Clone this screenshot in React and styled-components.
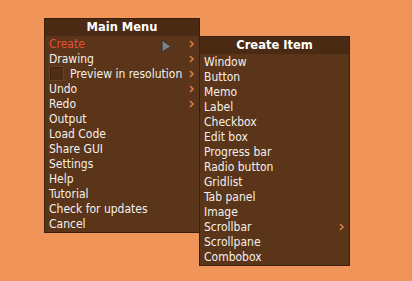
import React from "react";
import styled, { createGlobalStyle } from "styled-components";

const Global = createGlobalStyle`
  html, body {
    margin: 0;
    padding: 0;
    background: #f0945a;
  }
  body {
    font-family: "DejaVu Sans Condensed", "DejaVu Sans", sans-serif;
  }
`;

const Page = styled.div`
  width: 412px;
  height: 281px;
  position: relative;
  overflow: hidden;
  display: flex;
  align-items: flex-start;
  padding: 18px 0 0 44px;
  box-sizing: border-box;
`;

const Menu = styled.div`
  width: ${(p) => p.$width}px;
  margin-top: ${(p) => p.$offset || 0}px;
  margin-left: ${(p) => (p.$offset ? -1 : 0)}px;
  background: #5a3519;
  border: 1px solid #3a1f0c;
  box-sizing: border-box;
  display: flex;
  flex-direction: column;
  padding-bottom: 1px;
`;

const Header = styled.div`
  height: 17px;
  line-height: 17px;
  background: #4a2a13;
  color: #ffffff;
  font-family: "DejaVu Sans", sans-serif;
  font-weight: bold;
  font-size: 11.5px;
  text-align: center;
`;

const Item = styled.div`
  height: 15px;
  display: flex;
  align-items: center;
  justify-content: space-between;
  padding: 0 5px 0 4px;
  color: ${(p) => (p.$active ? "#e3503a" : "#f4f0ec")};
  font-size: 12px;
  white-space: nowrap;
`;

const Label = styled.span`
  display: flex;
  align-items: center;
  gap: 6px;
`;

const Check = styled.span`
  width: 15px;
  height: 15px;
  box-sizing: border-box;
  border: 1px solid #6a4126;
  background: #4f2e15;
  box-shadow: inset 1px 1px 0 #3f230e;
`;

const Arrow = styled.svg`
  flex: none;
`;

const Cursor = styled.svg`
  position: absolute;
  left: 161px;
  top: 39px;
`;

const SubArrow = () => (
  <Arrow width="5" height="8" viewBox="0 0 5 8">
    <path d="M1 1 L4 4 L1 7" fill="none" stroke="#d97a44" strokeWidth="1.6" />
  </Arrow>
);

const mainItems = [
  { t: "Create", sub: true, active: true },
  { t: "Drawing", sub: true },
  { t: "Preview in resolution", sub: true, check: true },
  { t: "Undo", sub: true },
  { t: "Redo", sub: true },
  { t: "Output" },
  { t: "Load Code" },
  { t: "Share GUI" },
  { t: "Settings" },
  { t: "Help" },
  { t: "Tutorial" },
  { t: "Check for updates" },
  { t: "Cancel" },
];

const createItems = [
  "Window",
  "Button",
  "Memo",
  "Label",
  "Checkbox",
  "Edit box",
  "Progress bar",
  "Radio button",
  "Gridlist",
  "Tab panel",
  "Image",
  "Scrollbar",
  "Scrollpane",
  "Combobox",
];

export default function App() {
  return (
    <>
      <Global />
      <Page>
        <Menu $width={156}>
          <Header>Main Menu</Header>
          {mainItems.map((it) => (
            <Item key={it.t} $active={it.active}>
              <Label>
                {it.check && <Check />}
                {it.t}
              </Label>
              {it.sub && <SubArrow />}
            </Item>
          ))}
        </Menu>
        <Menu $width={151} $offset={18}>
          <Header>Create Item</Header>
          {createItems.map((t) => (
            <Item key={t}>
              <Label>{t}</Label>
              {t === "Scrollbar" && <SubArrow />}
            </Item>
          ))}
        </Menu>
        <Cursor width="11" height="14" viewBox="0 0 11 14">
          <path d="M1 1 L10 7.5 L1 13 Z" fill="#808084" stroke="#2e2e30" strokeWidth="1" />
        </Cursor>
      </Page>
    </>
  );
}
